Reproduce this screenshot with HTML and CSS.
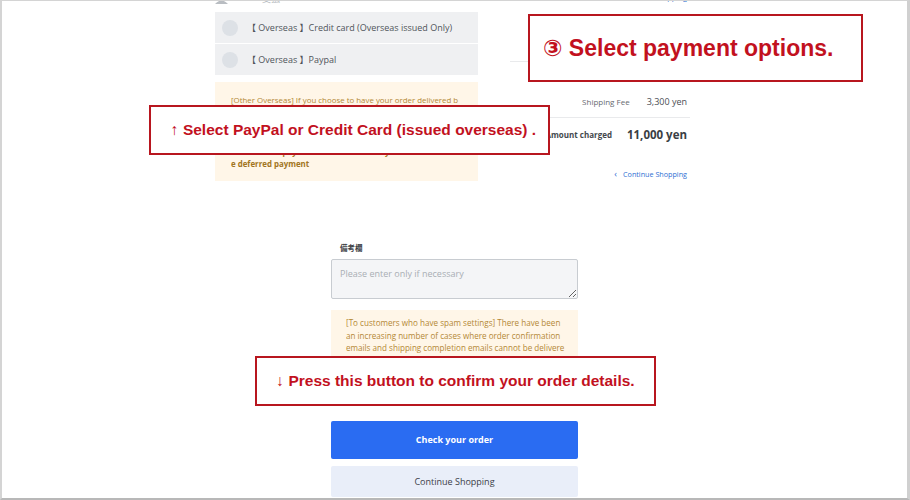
FILE: index.html
```html
<!DOCTYPE html>
<html lang="en">
<head>
<meta charset="utf-8">
<title>Order – payment</title>
<link rel="stylesheet" href="styles.css">
</head>
<body>
<div class="page">
  <div class="upper">
    <div class="left">
      <div class="peek-left">
        <svg class="peek-icon" width="13" height="12" viewBox="0 0 13 12"><circle cx="6.5" cy="4" r="3.5" fill="#b9bdc2"/><path d="M0 12 Q6.5 5 13 12 Z" fill="#b9bdc2"/></svg>
        <span class="peek-text">支払</span>
      </div>
      <div class="options">
        <div class="option"><span class="radio"></span><span class="option-text">【 Overseas 】Credit card (Overseas issued Only)</span></div>
        <div class="option"><span class="radio"></span><span class="option-text">【 Overseas 】Paypal</span></div>
      </div>
      <div class="notice notice-pay">
        <p class="notice-p1">[Other Overseas] If you choose to have your order delivered b<br>y EMS, please select PayPal or a credit card issued overseas<br>as the payment method. Orders placed with any other payme<br>nt method will be cancelled.</p>
        <p class="notice-bold">the deferred payment・cash on delivery・convenience stor<br>e deferred payment</p>
      </div>
    </div>
    <div class="right">
      <div class="peek-right"><span class="link">Edit shipping</span></div>
      <div class="summary">
        <div class="row row-sep row-short"><span class="label">Subtotal</span><span class="value">7,700 yen</span></div>
        <div class="row row-short"><span class="label">Handling Fee</span><span class="value">0 yen</span></div>
        <div class="row row-sep"><span class="label">Shipping Fee</span><span class="value">3,300 yen</span></div>
        <div class="row row-total"><span class="label">Amount charged</span><span class="value">11,000 yen</span></div>
      </div>
      <div class="back"><span class="link"><span class="chev">‹</span>Continue Shopping</span></div>
    </div>
  </div>

  <div class="lower">
    <div class="column">
      <div class="field-label">備考欄</div>
      <textarea class="remarks" placeholder="Please enter only if necessary"></textarea>
      <div class="notice notice-mail">
        <p class="notice-lines">[To customers who have spam settings] There have been<br>an increasing number of cases where order confirmation<br>emails and shipping completion emails cannot be delivere<br>d. Please disable your spam settings before completing yo<br>ur order.</p>
      </div>
      <button class="btn btn-primary">Check your order</button>
      <button class="btn btn-secondary">Continue Shopping</button>
    </div>
  </div>

  <div class="callout callout-up">↑ Select PayPal or Credit Card (issued overseas) .</div>
  <div class="callout callout-step">③ Select payment options.</div>
  <div class="callout callout-down">↓ Press this button to confirm your order details.</div>
</div>
</body>
</html>
```

FILE: styles.css
```css
html, body {
  margin: 0;
  padding: 0;
  background: #ffffff;
}

.page {
  position: relative;
  box-sizing: border-box;
  width: 910px;
  height: 500px;
  overflow: hidden;
  background: #ffffff;
  border-top: 1px solid #d4d4d4;
  border-left: 2px solid #d4d4d4;
  border-right: 3px solid #d0d0d0;
  border-bottom: 2px solid #b8b8b8;
  font-family: "Open Sans", "Noto Sans CJK JP", sans-serif;
  color: #555a60;
}

/* ---------- upper area ---------- */
.upper {
  display: flex;
  gap: 32px;
  margin-top: -9px;
  margin-left: 213px;
}

.left {
  width: 263px;
  display: flex;
  flex-direction: column;
}

.peek-left {
  height: 12px;
  display: flex;
  align-items: flex-end;
  gap: 34px;
}

.peek-icon {
  display: block;
}

.peek-text {
  font-size: 9px;
  line-height: 10px;
  color: #b9bdc2;
}

.options {
  margin-top: 8px;
  display: flex;
  flex-direction: column;
  gap: 1px;
}

.option {
  height: 31px;
  background: #eff0f2;
  display: flex;
  align-items: center;
  padding-left: 7px;
  gap: 9px;
}

.radio {
  width: 16px;
  height: 16px;
  border-radius: 50%;
  background: #dde1e6;
  flex: none;
}

.option-text {
  font-size: 9px;
  color: #50555b;
  white-space: nowrap;
}

.notice {
  background: #fff6e8;
  color: #b48835;
}

.notice p {
  margin: 0;
  white-space: nowrap;
  overflow: hidden;
}

.notice-pay {
  margin-top: 7px;
  padding: 12px 15px 11px 16px;
  font-size: 7.9px;
  line-height: 12px;
}

.notice-p1 {
  height: 48px;
}

.notice-bold {
  margin-top: 4px !important;
  font-weight: 700;
  color: #a27521;
}

.right {
  width: 180px;
  display: flex;
  flex-direction: column;
}

.peek-right {
  height: 12px;
  text-align: right;
  padding-right: 3px;
  font-size: 7.5px;
  line-height: 10px;
}

.link {
  color: #2f6fd3;
}

.summary {
  margin-top: 34px;
  display: flex;
  flex-direction: column;
}

.row {
  box-sizing: border-box;
  height: 32px;
  display: flex;
  justify-content: flex-end;
  align-items: center;
  gap: 17px;
  padding-right: 3px;
}

.row-short {
  height: 24px;
}

.row-sep {
  border-bottom: 1px solid #e9eaec;
}

.label {
  font-size: 8px;
  color: #666a70;
}

.value {
  font-size: 9px;
  color: #4a4e54;
}

.row-total {
  gap: 15px;
}

.row-total .label {
  font-weight: 700;
  color: #44484d;
}

.row-total .value {
  font-size: 11.5px;
  font-weight: 700;
  color: #3a3e43;
}

.back {
  margin-top: 18px;
  text-align: right;
  padding-right: 3px;
  font-size: 7.2px;
  line-height: 12px;
}

.chev {
  margin-right: 6px;
  font-size: 9px;
}

/* ---------- lower area ---------- */
.lower {
  margin-top: 61px;
  display: flex;
  justify-content: center;
}

.column {
  width: 247px;
  display: flex;
  flex-direction: column;
}

.field-label {
  font-size: 7.5px;
  line-height: 12px;
  font-weight: 700;
  color: #3c4046;
  padding-left: 9px;
  margin-bottom: 5px;
}

.remarks {
  box-sizing: border-box;
  display: block;
  width: 247px;
  height: 40px;
  margin: 0;
  padding: 7px 8px;
  border: 1px solid #c8ccd1;
  border-radius: 2px;
  background: #f4f5f7;
  font-family: "Open Sans", sans-serif;
  font-size: 9px;
  color: #444;
}

.remarks::placeholder {
  color: #a9aeb4;
}

.notice-mail {
  margin-top: 11px;
  padding: 7px 6px 7px 15px;
  font-size: 8.1px;
  line-height: 12.5px;
}

.btn {
  display: block;
  width: 247px;
  margin: 0;
  border: none;
  border-radius: 2px;
  font-family: "Open Sans", sans-serif;
  font-size: 9px;
  cursor: pointer;
}

.btn-primary {
  margin-top: 34px;
  height: 38px;
  background: #2a6cf2;
  color: #ffffff;
  font-weight: 700;
}

.btn-secondary {
  margin-top: 7px;
  height: 31px;
  background: #e9eef9;
  color: #3b4048;
}

/* ---------- annotation callouts ---------- */
.callout {
  position: absolute;
  box-sizing: border-box;
  display: flex;
  align-items: center;
  background: #ffffff;
  border: 2px solid #b8161f;
  color: #c2111e;
  font-family: "Liberation Sans", Arial, "DejaVu Sans", sans-serif;
  font-weight: 700;
  white-space: nowrap;
}

.callout-up {
  left: 147px;
  top: 104px;
  width: 401px;
  height: 50px;
  justify-content: center;
  padding-left: 8px;
  font-size: 15.5px;
}

.callout-step {
  left: 526px;
  top: 13px;
  width: 335px;
  height: 68px;
  padding-left: 13px;
  font-size: 23px;
}

.callout-down {
  left: 253px;
  top: 355px;
  width: 401px;
  height: 50px;
  justify-content: center;
  font-size: 15.5px;
}
```
